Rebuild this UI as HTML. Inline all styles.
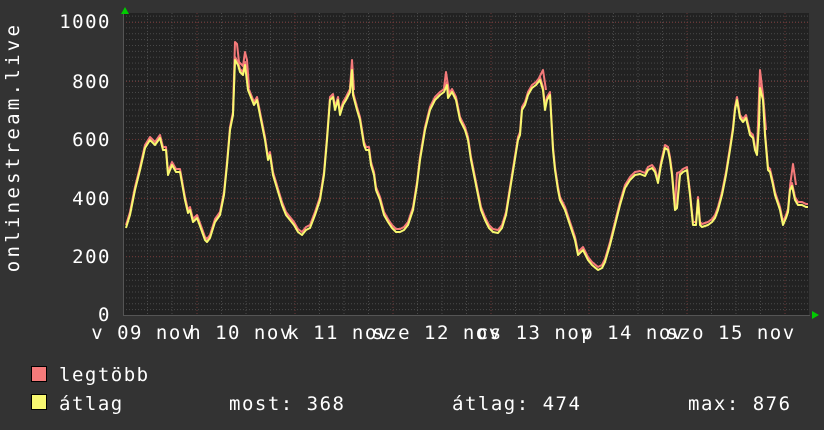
<!DOCTYPE html>
<html><head><meta charset="utf-8"><style>
html,body{margin:0;padding:0;background:#333;}
svg{display:block}
text{font-family:"DejaVu Sans Mono","Liberation Mono",monospace;fill:#fff;font-size:19px;letter-spacing:1.5px}
</style></head><body>
<svg width="824" height="430" viewBox="0 0 824 430" xmlns="http://www.w3.org/2000/svg">
<defs>
<pattern id="hg" x="0" y="315" width="824" height="5.87" patternUnits="userSpaceOnUse">
<line x1="0" y1="0.5" x2="824" y2="0.5" stroke="#4a4a4a" stroke-width="1" stroke-dasharray="1,2"/>
</pattern>
</defs>
<rect x="0" y="0" width="824" height="430" fill="#333"/>
<rect x="123" y="13" width="686" height="302" fill="#222"/>
<rect x="123" y="13" width="686" height="302" fill="url(#hg)"/>
<g stroke="#4a4a4a" stroke-dasharray="1,2" stroke-width="1">
<line x1="147.5" y1="13" x2="147.5" y2="315"/><line x1="172" y1="13" x2="172" y2="315"/>
<line x1="221.5" y1="13" x2="221.5" y2="315"/><line x1="246" y1="13" x2="246" y2="315"/><line x1="270.5" y1="13" x2="270.5" y2="315"/>
<line x1="319.5" y1="13" x2="319.5" y2="315"/><line x1="344" y1="13" x2="344" y2="315"/><line x1="368.5" y1="13" x2="368.5" y2="315"/>
<line x1="417.5" y1="13" x2="417.5" y2="315"/><line x1="442" y1="13" x2="442" y2="315"/><line x1="466.5" y1="13" x2="466.5" y2="315"/>
<line x1="515.5" y1="13" x2="515.5" y2="315"/><line x1="540" y1="13" x2="540" y2="315"/><line x1="564.5" y1="13" x2="564.5" y2="315"/>
<line x1="613.5" y1="13" x2="613.5" y2="315"/><line x1="638" y1="13" x2="638" y2="315"/><line x1="662.5" y1="13" x2="662.5" y2="315"/>
<line x1="711.5" y1="13" x2="711.5" y2="315"/><line x1="736" y1="13" x2="736" y2="315"/><line x1="760.5" y1="13" x2="760.5" y2="315"/>
</g>
<g stroke="#6a3535" stroke-dasharray="1,2" stroke-width="1">
<line x1="197" y1="13" x2="197" y2="315"/><line x1="295" y1="13" x2="295" y2="315"/><line x1="393" y1="13" x2="393" y2="315"/>
<line x1="491" y1="13" x2="491" y2="315"/><line x1="589" y1="13" x2="589" y2="315"/><line x1="687" y1="13" x2="687" y2="315"/><line x1="785" y1="13" x2="785" y2="315"/>
<line x1="123" y1="22.5" x2="809" y2="22.5"/><line x1="123" y1="81.5" x2="809" y2="81.5"/><line x1="123" y1="139.5" x2="809" y2="139.5"/>
<line x1="123" y1="198.5" x2="809" y2="198.5"/><line x1="123" y1="256.5" x2="809" y2="256.5"/>
</g>
<line x1="123" y1="315.5" x2="810" y2="315.5" stroke="#555"/>
<line x1="123.5" y1="12" x2="123.5" y2="316" stroke="#555"/>
<polygon points="121,14 125,7 129,14" fill="#0c0"/>
<polygon points="812,311 819,315 812,319" fill="#0c0"/>
<g fill="none" stroke="#f57a7a" stroke-width="2" stroke-linejoin="round">
<polyline transform="translate(0,-3)" points="126,228 130,215 135,190 140,170 145,148 150,140 155,145 160,138 163,150 166,150 168,175 172,165 176,172 180,172 185,200 188,213 190,210 193,222 197,218 200,226 205,240 207,242 210,238 215,222 220,215 224,195 227,165 230,130 233,115 235,60 238,65 240,72 243,75 245,65 248,90 250,95 254,105 257,100 260,115 263,130 265,140 268,160 270,155 273,175 276,185 279,195 282,205 286,215 290,220 294,225 298,232 302,235 306,230 310,228 315,215 320,200 324,175 327,140 330,100 333,97 335,110 338,100 340,115 343,105 346,100 350,92 352,70 353,95 357,110 360,120 364,145 366,150 369,150 371,165 374,175 376,190 380,200 384,215 388,222 392,228 396,232 400,232 404,230 408,225 413,210 417,185 420,160 425,130 430,110 435,100 440,95 444,92 447,85 448,98 452,92 456,100 460,120 465,130 468,140 471,160 475,180 478,195 481,210 485,220 489,228 493,232 498,233 502,228 506,215 510,190 514,165 518,140 520,135 522,110 525,105 528,95 532,88 536,85 540,80 543,90 545,110 547,100 550,95 553,150 555,170 558,190 560,200 565,210 570,225 575,240 578,255 583,250 588,260 592,265 598,270 602,268 605,262 610,245 615,225 620,205 625,188 630,180 635,175 640,174 645,176 648,170 652,168 655,172 658,183 661,165 665,148 668,150 670,160 672,175 675,210 677,208 680,175 683,172 687,170 690,195 693,225 696,225 698,200 700,225 702,227 708,225 712,222 715,218 718,210 722,195 726,175 730,150 733,130 735,110 737,100 740,118 743,122 746,118 750,135 753,138 755,150 757,155 759,125 760,88 763,100 765,135 768,170 770,172 773,185 775,195 780,210 783,225 786,218 788,212 790,190 792,186 795,200 798,205 802,205 806,207 808,207"/>
<polyline points="233,110 235,42 237,44 239,62 243,66 245,52 247,60 249,88"/>
<polyline points="350,88 352,60 354,90"/>
<polyline points="444,88 446,72 449,92"/>
<polyline points="539,78 543,70 546,90"/>
<polyline points="757,150 760,70 763,95 766,130"/>
<polyline points="675,205 677,173 680,172"/>
<polyline points="790,186 793,164 796,185"/>
</g>
<polyline fill="none" stroke="#f8f870" stroke-width="2" stroke-linejoin="round" points="126,228 130,215 135,190 140,170 145,148 150,140 155,145 160,138 163,150 166,150 168,175 172,165 176,172 180,172 185,200 188,213 190,210 193,222 197,218 200,226 205,240 207,242 210,238 215,222 220,215 224,195 227,165 230,130 233,115 235,60 238,65 240,72 243,75 245,65 248,90 250,95 254,105 257,100 260,115 263,130 265,140 268,160 270,155 273,175 276,185 279,195 282,205 286,215 290,220 294,225 298,232 302,235 306,230 310,228 315,215 320,200 324,175 327,140 330,100 333,97 335,110 338,100 340,115 343,105 346,100 350,92 352,70 353,95 357,110 360,120 364,145 366,150 369,150 371,165 374,175 376,190 380,200 384,215 388,222 392,228 396,232 400,232 404,230 408,225 413,210 417,185 420,160 425,130 430,110 435,100 440,95 444,92 447,85 448,98 452,92 456,100 460,120 465,130 468,140 471,160 475,180 478,195 481,210 485,220 489,228 493,232 498,233 502,228 506,215 510,190 514,165 518,140 520,135 522,110 525,105 528,95 532,88 536,85 540,80 543,90 545,110 547,100 550,95 553,150 555,170 558,190 560,200 565,210 570,225 575,240 578,255 583,250 588,260 592,265 598,270 602,268 605,262 610,245 615,225 620,205 625,188 630,180 635,175 640,174 645,176 648,170 652,168 655,172 658,183 661,165 665,148 668,150 670,160 672,175 675,210 677,208 680,175 683,172 687,170 690,195 693,225 696,225 698,200 700,225 702,227 708,225 712,222 715,218 718,210 722,195 726,175 730,150 733,130 735,110 737,100 740,118 743,122 746,118 750,135 753,138 755,150 757,155 759,125 760,88 763,100 765,135 768,170 770,172 773,185 775,195 780,210 783,225 786,218 788,212 790,190 792,186 795,200 798,205 802,205 806,207 808,207"/>
<g text-anchor="end">
<text x="111" y="28">1000</text><text x="111" y="88">800</text><text x="111" y="146">600</text>
<text x="111" y="205">400</text><text x="111" y="263">200</text><text x="111" y="321">0</text>
</g>
<g text-anchor="middle">
<text x="143" y="339">v 09 nov</text><text x="241" y="339">h 10 nov</text><text x="339" y="339">k 11 nov</text>
<text x="437" y="339">sze 12 nov</text><text x="535" y="339">cs 13 nov</text><text x="633" y="339">p 14 nov</text><text x="731" y="339">szo 15 nov</text>
</g>
<text transform="translate(19,147) rotate(-90)" text-anchor="middle" style="letter-spacing:3.3px">onlinestream.live</text>
<rect x="31.5" y="366.5" width="15" height="15" fill="#f57a7a" stroke="#000"/>
<rect x="31.5" y="394.5" width="15" height="15" fill="#f8f870" stroke="#000"/>
<text x="59" y="381">legtöbb</text>
<text x="59" y="410">átlag</text>
<text x="229" y="410">most: 368</text>
<text x="452" y="410">átlag: 474</text>
<text x="688" y="410">max: 876</text>
</svg>
</body></html>
